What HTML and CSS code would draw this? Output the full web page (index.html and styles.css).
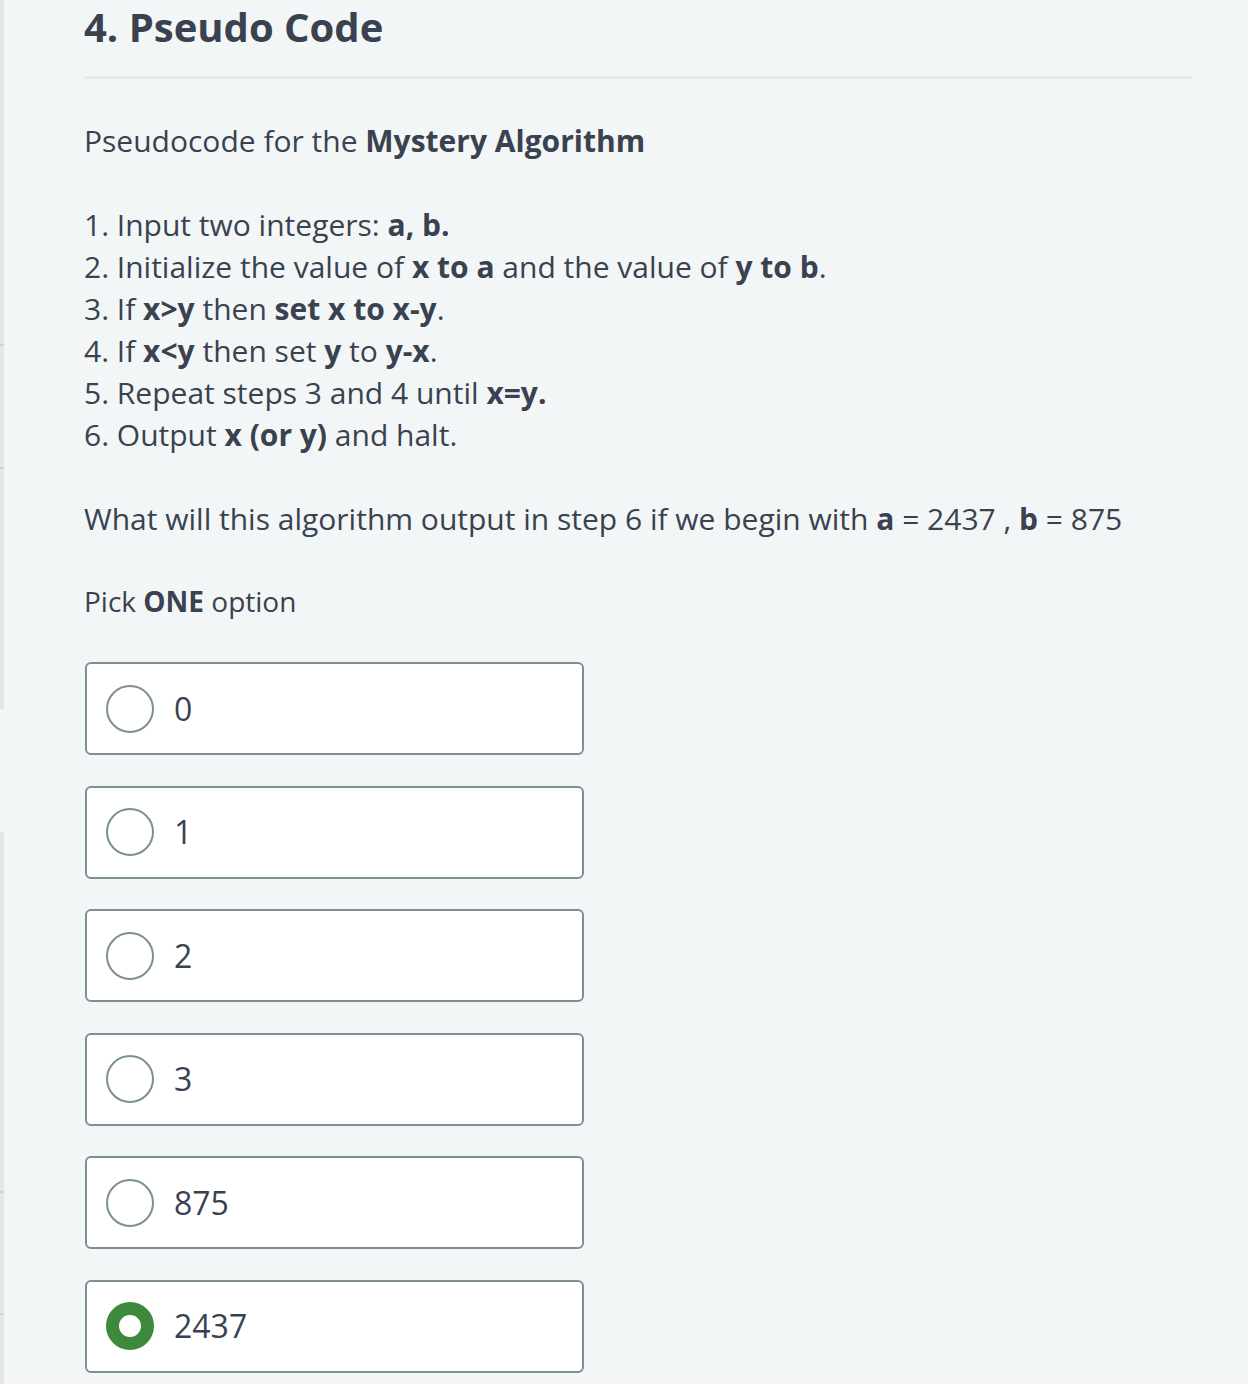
FILE: index.html
```html
<!DOCTYPE html>
<html lang="en">
<head>
<meta charset="utf-8">
<title>4. Pseudo Code</title>
<link rel="stylesheet" href="styles.css">
</head>
<body>
<div class="page">
  <aside class="rail">
    <div class="seg seg-1"></div>
    <div class="seg seg-2"></div>
    <div class="seg seg-3"></div>
    <div class="seg-gap"></div>
    <div class="seg seg-4"></div>
    <div class="seg seg-5"></div>
    <div class="seg seg-6"></div>
  </aside>
  <main class="content">
    <h1 class="title">4. Pseudo Code</h1>
    <div class="body">
      <p class="para">Pseudocode for the <b>Mystery Algorithm</b></p>
      <p class="para">
        1. Input two integers: <b>a, b.</b><br>
        2. Initialize the value of <b>x to a</b> and the value of <b>y to b</b>.<br>
        3. If <b>x&gt;y</b> then <b>set x to x-y</b>.<br>
        4. If <b>x&lt;y</b> then set <b>y</b> to <b>y-x</b>.<br>
        5. Repeat steps 3 and 4 until <b>x=y.</b><br>
        6. Output <b>x (or y)</b> and halt.
      </p>
      <p class="para">What will this algorithm output in step 6 if we begin with <b>a</b> = 2437 , <b>b</b> = 875</p>
      <p class="para para-last">Pick <b>ONE</b> option</p>
    </div>
    <ul class="options">
      <li class="option"><span class="radio"></span><span class="opt-text">0</span></li>
      <li class="option"><span class="radio"></span><span class="opt-text">1</span></li>
      <li class="option"><span class="radio"></span><span class="opt-text">2</span></li>
      <li class="option"><span class="radio"></span><span class="opt-text">3</span></li>
      <li class="option"><span class="radio"></span><span class="opt-text">875</span></li>
      <li class="option is-selected"><span class="radio"></span><span class="opt-text">2437</span></li>
    </ul>
  </main>
</div>
</body>
</html>
```

FILE: styles.css
```css
html, body {
  margin: 0;
  padding: 0;
  background: #f3f6f7;
}

body {
  font-family: "Open Sans", "Noto Sans", sans-serif;
  color: #39424e;
  height: 1384px;
  overflow: hidden;
}

.page {
  display: flex;
  min-height: 1384px;
}

.rail {
  width: 4px;
  flex: 0 0 4px;
  display: flex;
  flex-direction: column;
}

.seg {
  background: #e2e7e8;
  border-bottom: 2px solid #cfd5d7;
}

.seg-1 { height: 344px; }
.seg-2 { height: 121px; }
.seg-3 { height: 240px; border-bottom: none; }
.seg-gap { height: 123px; }
.seg-4 { height: 359px; }
.seg-5 { height: 120px; }
.seg-6 { flex: 1; border-bottom: none; }

.content {
  flex: 1;
  padding: 0 56px 0 80px;
}

.title {
  margin: 0;
  font-size: 40px;
  line-height: 54px;
  font-weight: 700;
  padding-bottom: 22px;
  border-bottom: 3px solid #e6eaeb;
}

.body {
  padding-top: 41px;
}

.para {
  margin: 0 0 42px;
  font-size: 30px;
  line-height: 42px;
}

.para-last {
  font-size: 28px;
  margin-top: -2px;
  margin-bottom: 40px;
}

.para b {
  font-weight: 700;
}

.options {
  list-style: none;
  margin: 0;
  padding: 0;
  display: flex;
  flex-direction: column;
  gap: 30.6px;
}

.option {
  box-sizing: border-box;
  width: 499px;
  height: 93px;
  margin-left: 1px;
  background: #ffffff;
  border: 2px solid #7d8f94;
  border-radius: 6px;
  display: flex;
  align-items: center;
  padding-left: 19px;
}

.radio {
  box-sizing: border-box;
  width: 48px;
  height: 48px;
  border-radius: 50%;
  border: 2px solid #7c8f93;
  background: #ffffff;
  flex: 0 0 48px;
}

.is-selected .radio {
  border: 13px solid #3d8a3d;
}

.opt-text {
  margin-left: 20px;
  font-size: 32px;
  line-height: 44px;
}
```
